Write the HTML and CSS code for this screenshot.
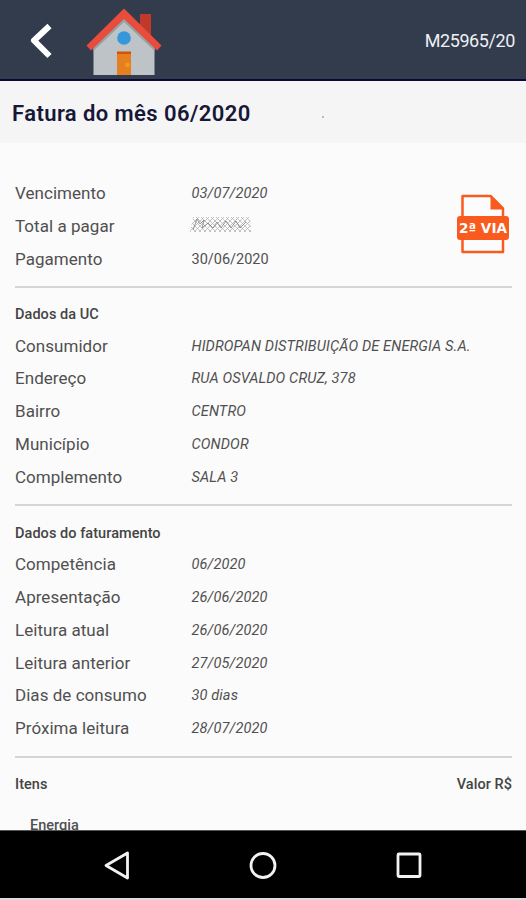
FILE: index.html
```html
<!DOCTYPE html>
<html lang="pt-BR">
<head>
<meta charset="utf-8">
<title>Fatura</title>
<link rel="stylesheet" href="styles.css">
</head>
<body>
<div class="screen">
  <header class="topbar">
    <svg class="back" width="24" height="38" viewBox="0 0 24 38"><path d="M20.500 4 5 18.500 20.500 34" fill="none" stroke="#fff" stroke-width="6" stroke-linejoin="round"/></svg>
    <svg class="home" width="78" height="70" viewBox="0 0 78 70">
      <path d="M54 7h11v27L54 23z" fill="#c0392b"/>
      <path d="M7.500 37 38 10l30.500 27v31h-61z" fill="#bdc3c7"/>
      <path d="M7.500 38v6L38 15l30.500 29v-6L38 8z" fill="#95a5a6"/>
      <path d="M38 1.500.5 38.500l4.500 5L38 12l33 31.500 4.500-5z" fill="#e74c3c"/>
      <circle cx="38" cy="31" r="6.800" fill="#3498db"/>
      <path d="M31 45h14v23H31z" fill="#e67e22"/>
      <path d="M31 44.500h14V47H31z" fill="#d35400"/>
      <circle cx="41.500" cy="58" r="2.400" fill="#f39c12"/>
    </svg>
    <span class="code">M25965/20</span>
  </header>
  <div class="titlebar"><h1>Fatura do mês 06/2020</h1><i class="speck"></i></div>
  <main>
    <section class="summary">
      <dl>
        <div><dt>Vencimento</dt><dd>03/07/2020</dd></div>
        <div><dt>Total a pagar</dt><dd class="masked"><svg width="62" height="18" viewBox="0 0 62 18">
          <defs><pattern id="hatch" width="5" height="5" patternUnits="userSpaceOnUse"><path d="M0 5 5 0M0 0l5 5" stroke="#aaa" stroke-width=".7"/></pattern></defs>
          <path d="M3 1h57l1 15H0z" fill="url(#hatch)"/>
          <path d="m3 14 4-11 3 5 4-4-2 8 6-5 5 5 4-6 4 6 5-7 5 7 5-7 4 7 6-6" fill="none" stroke="#777" stroke-width="1" opacity=".75"/>
        </svg></dd></div>
        <div><dt>Pagamento</dt><dd class="upright">30/06/2020</dd></div>
      </dl>
      <svg class="via" width="54" height="60" viewBox="0 0 54 60">
        <path d="M6.500 2h28L47 14.500V58H6.500z" fill="#fcfcfc" stroke="#f95a1d" stroke-width="2.500" stroke-linejoin="round"/>
        <path d="M34.500 1.500 47.500 14.500v1h-13z" fill="#f95a1d"/>
        <rect x="1" y="22" width="52" height="24" rx="3" fill="#f95a1d"/>
        <text x="27" y="38.500" text-anchor="middle" textLength="48" lengthAdjust="spacingAndGlyphs">2ª VIA</text>
      </svg>
    </section>
    <section class="unit">
      <h2>Dados da UC</h2>
      <dl>
        <div><dt>Consumidor</dt><dd>HIDROPAN DISTRIBUIÇÃO DE ENERGIA S.A.</dd></div>
        <div><dt>Endereço</dt><dd>RUA OSVALDO CRUZ, 378</dd></div>
        <div><dt>Bairro</dt><dd>CENTRO</dd></div>
        <div><dt>Município</dt><dd>CONDOR</dd></div>
        <div><dt>Complemento</dt><dd>SALA 3</dd></div>
      </dl>
    </section>
    <section class="billing">
      <h2>Dados do faturamento</h2>
      <dl class="dates">
        <div><dt>Competência</dt><dd>06/2020</dd></div>
        <div><dt>Apresentação</dt><dd>26/06/2020</dd></div>
        <div><dt>Leitura atual</dt><dd>26/06/2020</dd></div>
        <div><dt>Leitura anterior</dt><dd>27/05/2020</dd></div>
        <div><dt>Dias de consumo</dt><dd>30 dias</dd></div>
        <div><dt>Próxima leitura</dt><dd>28/07/2020</dd></div>
      </dl>
    </section>
    <section class="items">
      <div class="items-head"><h2>Itens</h2><h2>Valor R$</h2></div>
      <p>Energia</p>
    </section>
  </main>
  <nav>
    <svg width="30" height="32" viewBox="0 0 30 32"><path d="M25.500 4v25L4 16.500z"/></svg>
    <svg width="32" height="32" viewBox="0 0 32 32"><circle cx="16" cy="16.500" r="12"/></svg>
    <svg width="30" height="32" viewBox="0 0 30 32"><rect x="4" y="5" width="22" height="22.500" rx="1"/></svg>
  </nav>
</div>
</body>
</html>
```
FILE: styles.css
```css
* { box-sizing: border-box; margin: 0; padding: 0; }
body { background: #fbfbfb; font-family: Roboto, "Liberation Sans", sans-serif; color: #505050; }
.screen { height: 900px; display: flex; flex-direction: column; overflow: hidden; }
svg { display: block; flex: none; }
.topbar { height: 81px; flex: none; display: flex; align-items: center; background: #333c4d; border-bottom: 2px solid #0b0a35; padding: 2px 11px 0 29px; }
.back { margin-right: 33px; }
.home { margin-top: 2px; }
.code { margin-left: auto; color: #eef0f3; font-size: 18px; letter-spacing: -0.4px; }
.titlebar { height: 62px; flex: none; display: flex; align-items: center; background: #f5f5f5; padding: 2px 12px 0; }
h1 { font-size: 22px; font-weight: 600; letter-spacing: 0.42px; color: #171738; width: 310px; }
.speck { width: 2px; height: 2px; background: #bbb; margin-top: 8px; }
main { flex: 1; min-height: 0; overflow: hidden; padding: 33.600px 14px 0 15px; }
.summary { display: flex; justify-content: space-between; height: 109px; }
.via { margin: 17px 2.500px 0 0; }
.via text { font: bold 13.500px "DejaVu Sans", sans-serif; fill: #fff; }
dl > div { display: flex; align-items: center; height: 32.800px; }
dt { width: 176.500px; font-size: 17px; letter-spacing: 0.04px; }
dd { font-size: 14.500px; font-style: italic; letter-spacing: 0.13px; white-space: nowrap; padding-top: 1px; }
.upright { font-style: normal; letter-spacing: 0; }
.masked { margin-left: -2px; padding: 0 0 1px; }
.unit, .billing, .items { border-top: 2px solid #d5d5d5; }
.unit { height: 218.600px; }
.billing { height: 251.500px; }
h2 { font-size: 14.500px; font-weight: 500; letter-spacing: 0.05px; line-height: 20px; color: #444; }
.unit h2, .billing h2 { padding-top: 17.500px; height: 41.600px; }
.items-head { display: flex; justify-content: space-between; padding-top: 17px; }
.items p { font-size: 14.500px; font-weight: 500; padding: 22px 0 0 15px; letter-spacing: 0; }
nav { height: 70px; flex: none; display: flex; align-items: center; justify-content: space-between; background: #000; border-top: 1px solid #555; border-bottom: 2px solid #ddd; padding: 0 102px 0 102px; }
nav svg { fill: none; stroke: #f2f2f2; stroke-width: 2.800; stroke-linejoin: round; }
```
